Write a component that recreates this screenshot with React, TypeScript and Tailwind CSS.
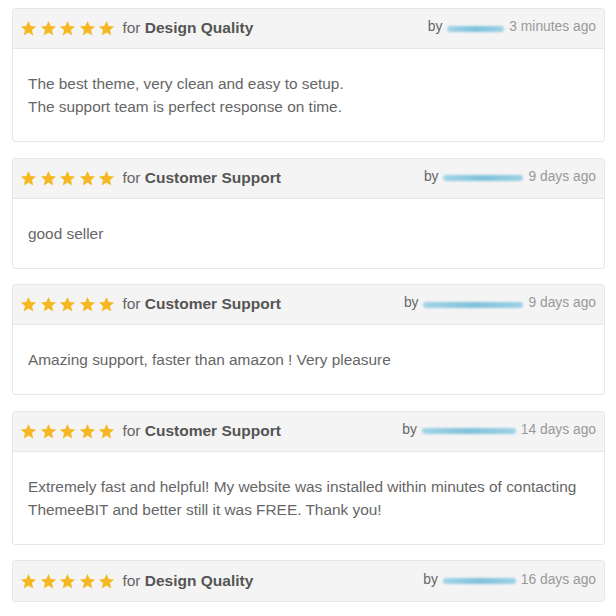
import React from "react";

type Review = {
  category: string;
  blur: number;
  time: string;
  lines: string[];
};

const reviews: Review[] = [
  {
    category: "Design Quality",
    blur: 57,
    time: "3 minutes ago",
    lines: [
      "The best theme, very clean and easy to setup.",
      "The support team is perfect response on time.",
    ],
  },
  { category: "Customer Support", blur: 80, time: "9 days ago", lines: ["good seller"] },
  {
    category: "Customer Support",
    blur: 100,
    time: "9 days ago",
    lines: ["Amazing support, faster than amazon ! Very pleasure"],
  },
  {
    category: "Customer Support",
    blur: 94,
    time: "14 days ago",
    lines: [
      "Extremely fast and helpful! My website was installed within minutes of contacting",
      "ThemeeBIT and better still it was FREE. Thank you!",
    ],
  },
  { category: "Design Quality", blur: 73, time: "16 days ago", lines: [] },
];

function Star() {
  return (
    <svg width="17" height="17" viewBox="0 0 24 24" className="shrink-0">
      <polygon
        points="12,1.5 15.1,8.6 22.8,9.2 16.9,14.2 18.7,21.8 12,17.7 5.3,21.8 7.1,14.2 1.2,9.2 8.9,8.6"
        fill="#f6b822"
      />
    </svg>
  );
}

function Card({ r }: { r: Review }) {
  return (
    <div className="shrink-0 border border-[#e2e8ee] rounded-[3px] bg-white overflow-hidden">
      <div
        className={`h-[40px] bg-[#f4f4f4] flex items-center justify-between pl-[7px] pr-[8px] ${
          r.lines.length ? "border-b border-[#e2e8ee]" : ""
        }`}
      >
        <div className="flex items-center">
          <div className="flex items-center gap-[2.6px]">
            <Star />
            <Star />
            <Star />
            <Star />
            <Star />
          </div>
          <span className="ml-[7px] text-[15.5px] text-[#666666] -mt-[1px]">
            for <span className="font-bold text-[#555555]">{r.category}</span>
          </span>
        </div>
        <div className="flex items-center text-[13.8px] -mt-[2px]">
          <span className="text-[#666666]">by</span>
          <span
            className="mx-[5px] mt-[2px] h-[6px] rounded-full bg-gradient-to-r from-[#a3d4e7] via-[#7fc2dc] to-[#9fd1e5] blur-[1.1px] inline-block"
            style={{ width: r.blur }}
          />
          <span className="text-[#999999]">{r.time}</span>
        </div>
      </div>
      {r.lines.length > 0 && (
        <div className="px-[15px] py-[23px] text-[15.4px] leading-[23px] text-[#666666] whitespace-nowrap">
          {r.lines.map((l, i) => (
            <div key={i}>{l}</div>
          ))}
        </div>
      )}
    </div>
  );
}

export default function App() {
  return (
    <div
      className="w-[616px] h-[616px] bg-white pt-[8px] pl-[12px] pr-[11px] flex flex-col gap-[15.5px] overflow-hidden"
      style={{ fontFamily: '"Liberation Sans", Arial, sans-serif' }}
    >
      {reviews.map((r, i) => (
        <Card key={i} r={r} />
      ))}
    </div>
  );
}
